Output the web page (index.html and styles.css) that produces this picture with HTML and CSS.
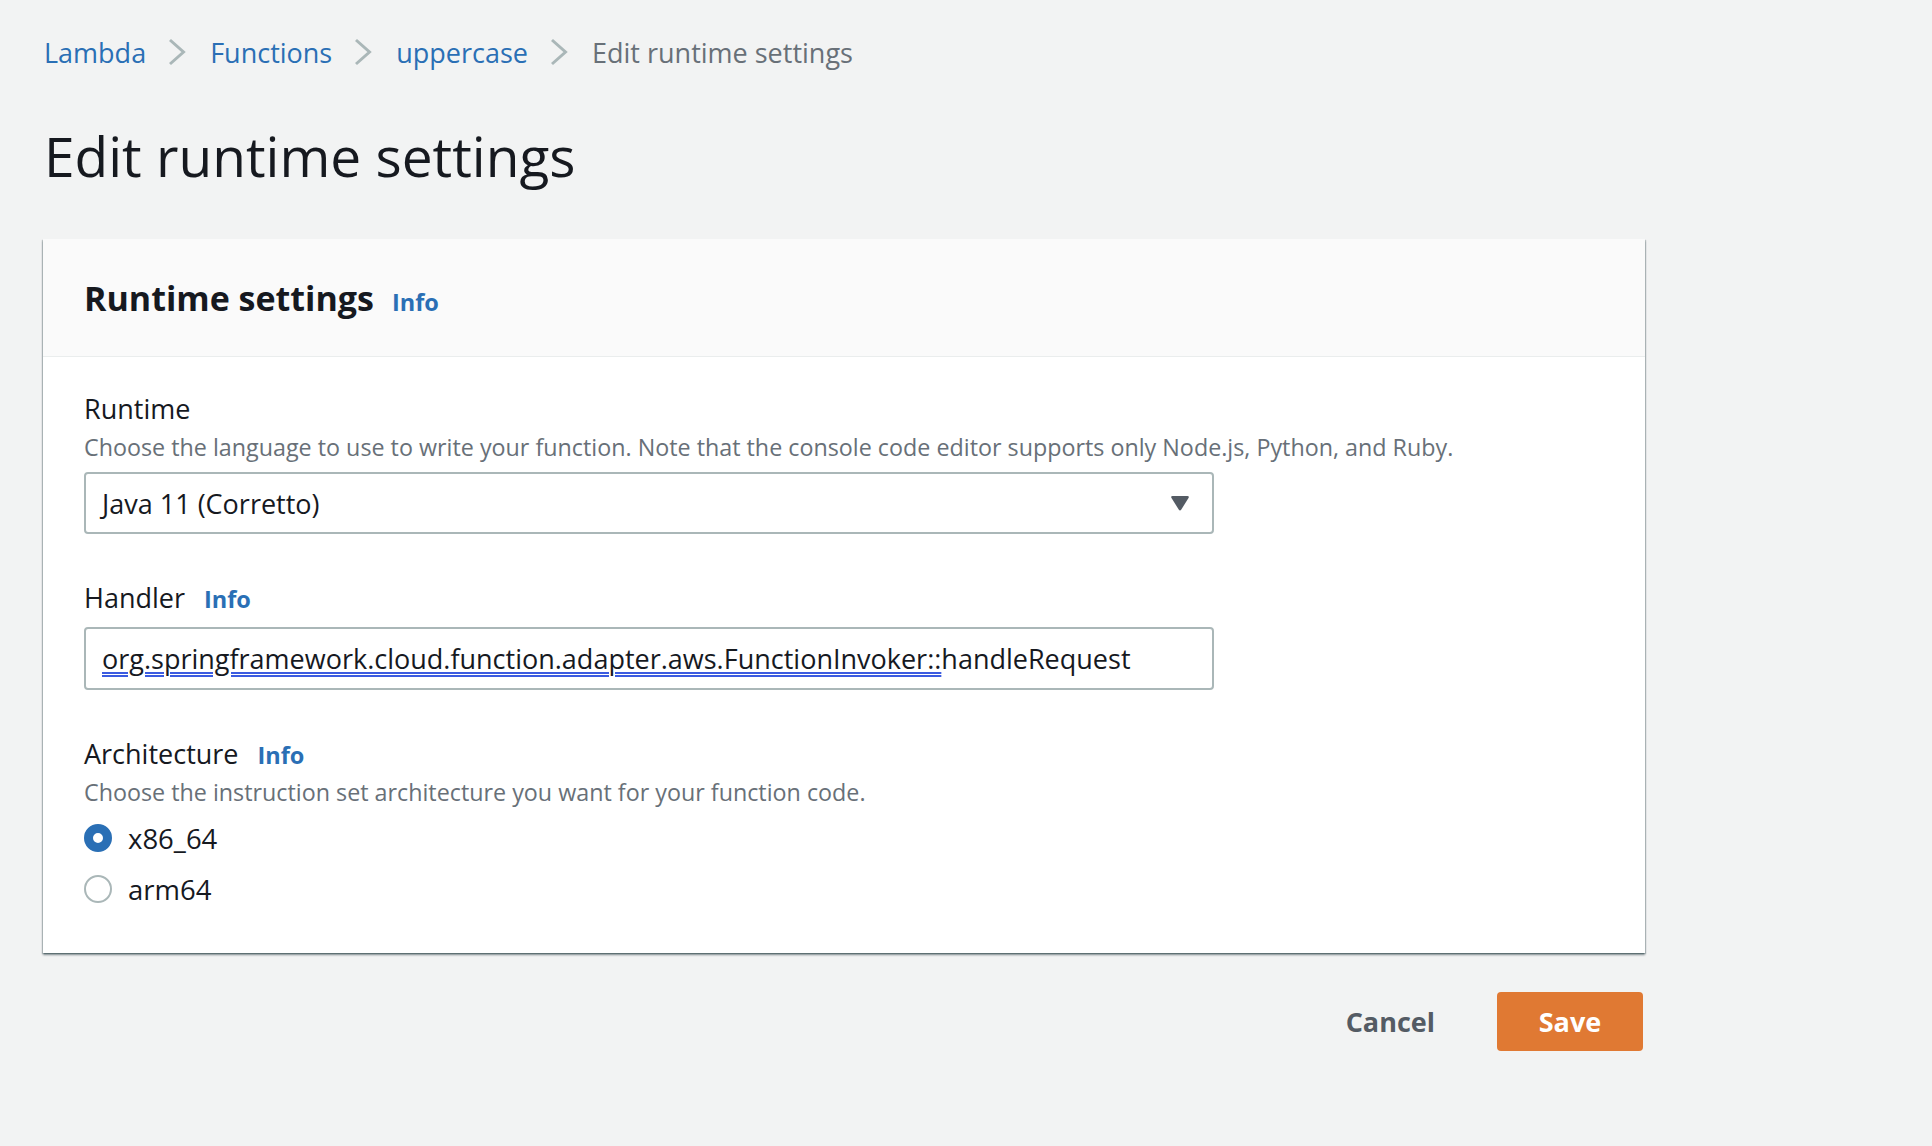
FILE: index.html
```html
<!DOCTYPE html>
<html lang="en">
<head>
<meta charset="utf-8">
<title>Edit runtime settings</title>
<link rel="stylesheet" href="styles.css">
</head>
<body>
<div class="page">
  <nav class="breadcrumbs">
    <a class="crumb-link" href="#">Lambda</a>
    <svg class="chev" width="18" height="28" viewBox="0 0 18 28"><polyline points="2,2 15.5,14 2,26" fill="none" stroke="#aab7b8" stroke-width="3"/></svg>
    <a class="crumb-link" href="#">Functions</a>
    <svg class="chev" width="18" height="28" viewBox="0 0 18 28"><polyline points="2,2 15.5,14 2,26" fill="none" stroke="#aab7b8" stroke-width="3"/></svg>
    <a class="crumb-link" href="#">uppercase</a>
    <svg class="chev" width="18" height="28" viewBox="0 0 18 28"><polyline points="2,2 15.5,14 2,26" fill="none" stroke="#aab7b8" stroke-width="3"/></svg>
    <span class="crumb-current">Edit runtime settings</span>
  </nav>

  <h1 class="title">Edit runtime settings</h1>

  <section class="card">
    <header class="card-header">
      <h2 class="card-title">Runtime settings</h2>
      <a class="info" href="#">Info</a>
    </header>
    <div class="card-body">
      <div class="field">
        <div class="label-row"><span class="label">Runtime</span></div>
        <div class="desc">Choose the language to use to write your function. Note that the console code editor supports only Node.js, Python, and Ruby.</div>
        <div class="select">
          <span class="select-text">Java 11 (Corretto)</span>
          <svg class="caret" width="20" height="16" viewBox="0 0 20 16"><path d="M2.5 1 H17.5 Q19.5 1 18.5 3 L11.3 14.6 Q10 16.4 8.7 14.6 L1.5 3 Q0.5 1 2.5 1 Z" fill="#545b64"/></svg>
        </div>
      </div>

      <div class="field field-gap">
        <div class="label-row"><span class="label">Handler</span><a class="info" href="#">Info</a></div>
        <div class="input"><span class="spell">org.springframework.cloud.function.adapter.aws.FunctionInvoker::</span>handleRequest</div>
      </div>

      <div class="field field-gap">
        <div class="label-row"><span class="label">Architecture</span><a class="info" href="#">Info</a></div>
        <div class="desc">Choose the instruction set architecture you want for your function code.</div>
        <div class="radios">
          <label class="radio-row"><span class="radio radio-on"></span><span class="radio-text">x86_64</span></label>
          <label class="radio-row"><span class="radio"></span><span class="radio-text">arm64</span></label>
        </div>
      </div>
    </div>
  </section>

  <div class="actions">
    <button class="btn-link">Cancel</button>
    <button class="btn-primary">Save</button>
  </div>
</div>
</body>
</html>
```

FILE: styles.css
```css
html, body {
  margin: 0;
  padding: 0;
  background: #f2f3f3;
}

body {
  font-family: "Open Sans", "Noto Sans", sans-serif;
  color: #16191f;
}

.page {
  padding: 34px 0 0 43px;
  width: 1602px;
}

.breadcrumbs {
  display: flex;
  align-items: center;
  height: 36px;
  padding-left: 1px;
  font-size: 27px;
}

.crumb-link {
  color: #2a6fb5;
  text-decoration: none;
}

.crumb-current {
  color: #687078;
}

.chev {
  margin: 0 24px 0 22px;
  display: block;
}

.title {
  margin: 54px 0 0 1px;
  font-size: 55px;
  line-height: 64px;
  font-weight: 400;
  color: #16191f;
}

.card {
  margin-top: 51px;
  background: #ffffff;
  box-shadow: 0 2px 2px 0 rgba(0, 28, 36, 0.45), 1px 1px 1px 0 rgba(0, 28, 36, 0.18), -1px 1px 1px 0 rgba(0, 28, 36, 0.18);
}

.card-header {
  display: flex;
  align-items: baseline;
  gap: 18px;
  padding: 39px 41px 38px 41px;
  background: #fafafa;
  border-bottom: 1px solid #eaeded;
}

.card-title {
  margin: 0;
  font-size: 34px;
  line-height: 40px;
  font-weight: 700;
  color: #16191f;
}

.info {
  font-size: 23.5px;
  font-weight: 700;
  color: #2a6fb5;
  text-decoration: none;
}

.card-body {
  padding: 34px 41px 44px 41px;
}

.field-gap {
  margin-top: 46px;
}

.label-row {
  display: flex;
  align-items: baseline;
  gap: 19px;
  height: 36px;
}

.label {
  font-size: 27px;
  line-height: 36px;
  color: #16191f;
}

.desc {
  margin-top: 4px;
  font-size: 23.3px;
  line-height: 32px;
  color: #687078;
}

.select {
  margin-top: 9px;
  box-sizing: border-box;
  width: 1130px;
  height: 62px;
  border: 2px solid #aab7b8;
  border-radius: 4px;
  display: flex;
  align-items: center;
  justify-content: space-between;
  padding: 0 22px 0 16px;
  font-size: 27px;
}

.caret {
  display: block;
}

.input {
  margin-top: 11px;
  box-sizing: border-box;
  width: 1130px;
  height: 63px;
  border: 2px solid #aab7b8;
  border-radius: 4px;
  display: flex;
  align-items: center;
  padding: 0 16px;
  font-size: 27px;
  white-space: nowrap;
}

.spell {
  text-decoration-line: underline;
  text-decoration-style: double;
  text-decoration-color: #3b5be0;
  text-decoration-thickness: 2px;
  text-underline-offset: 3px;
}

.radios {
  margin-top: 10px;
  display: flex;
  flex-direction: column;
  gap: 11px;
}

.radio-row {
  display: flex;
  align-items: center;
  gap: 16px;
  height: 40px;
}

.radio {
  box-sizing: border-box;
  width: 28px;
  height: 28px;
  border-radius: 50%;
  border: 2px solid #aab7b8;
  background: #ffffff;
}

.radio-on {
  border: 9px solid #2a6fb5;
}

.radio-text {
  font-size: 27.5px;
  color: #16191f;
}

.actions {
  margin-top: 39px;
  display: flex;
  justify-content: flex-end;
  align-items: center;
  gap: 42px;
  padding-right: 2px;
}

.btn-link {
  border: none;
  background: transparent;
  padding: 0 20px;
  font-family: "Open Sans", "Noto Sans", sans-serif;
  font-size: 27px;
  font-weight: 700;
  color: #545b64;
}

.btn-primary {
  border: none;
  width: 146px;
  height: 59px;
  border-radius: 4px;
  background: #e07933;
  font-family: "Open Sans", "Noto Sans", sans-serif;
  font-size: 27px;
  font-weight: 700;
  color: #ffffff;
}
```
